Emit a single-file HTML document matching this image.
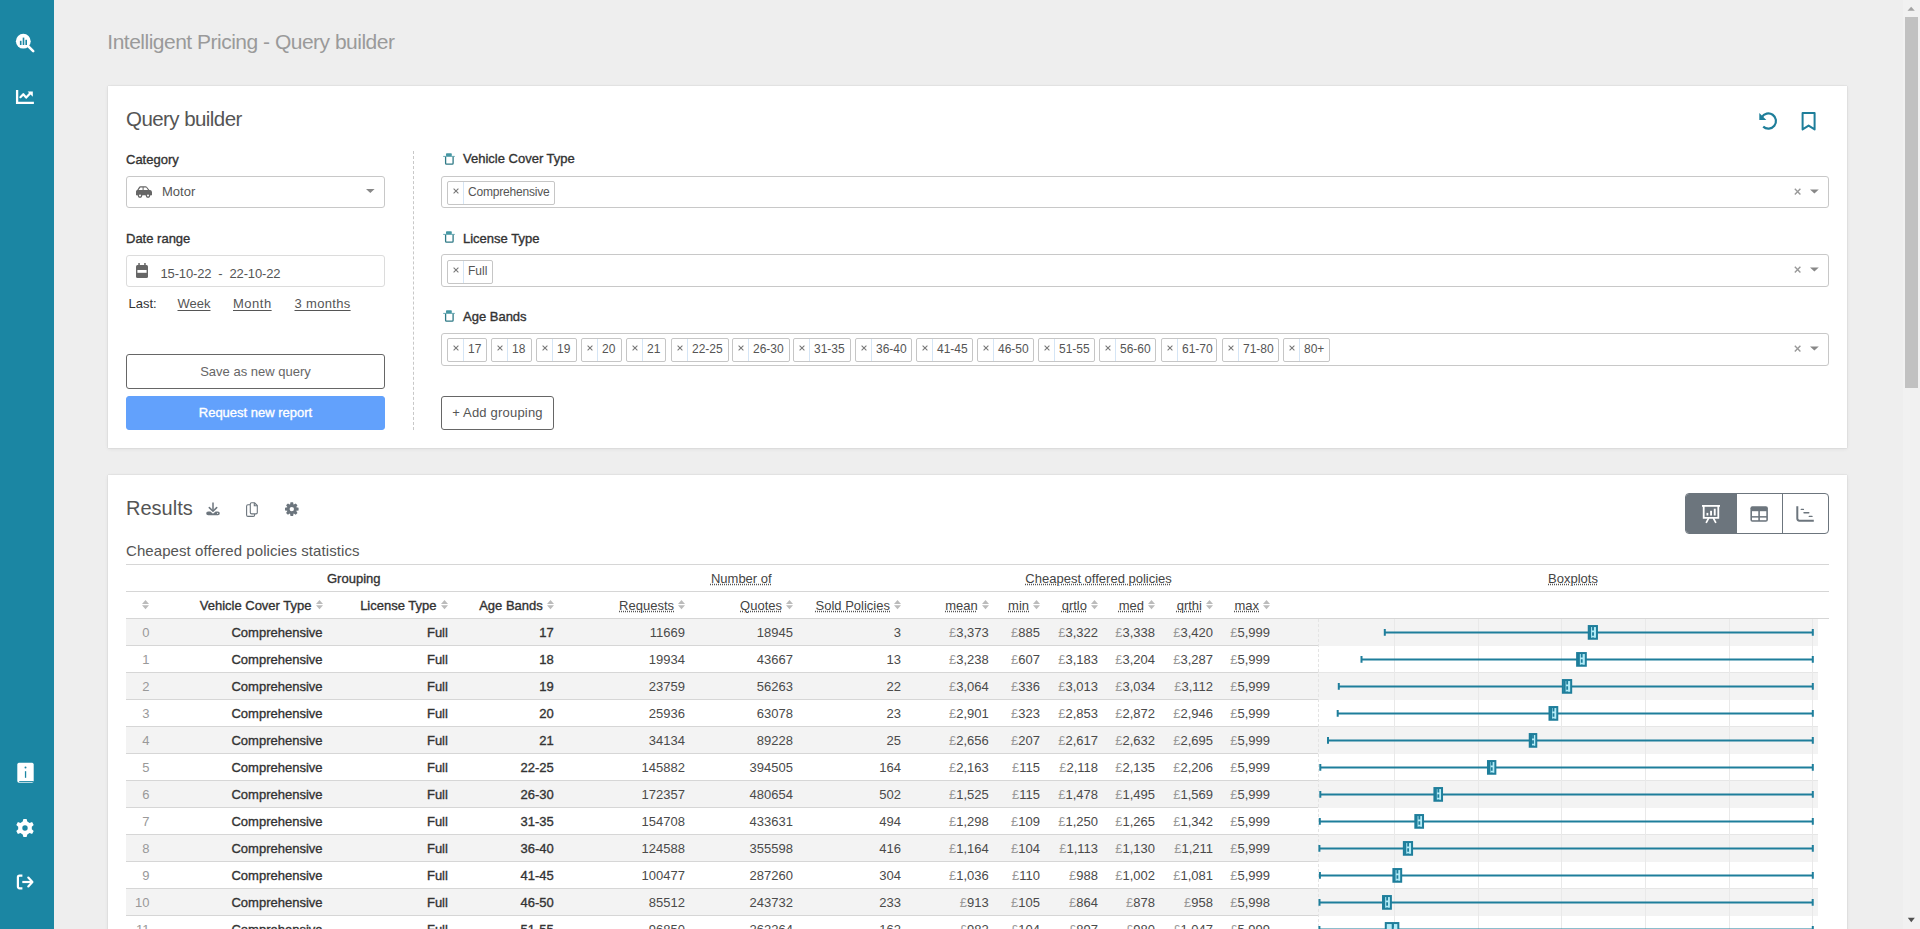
<!DOCTYPE html><html><head><meta charset="utf-8"><title>Intelligent Pricing - Query builder</title><style>
*{box-sizing:border-box;margin:0;padding:0}
html,body{width:1920px;height:929px;overflow:hidden;background:#eeeeee;font-family:"Liberation Sans",sans-serif;color:#333}
#side{position:absolute;left:0;top:0;width:54px;height:929px;background:#1b86a3}
#sb{position:absolute;left:1903px;top:0;width:17px;height:929px;background:#f1f1f1}
#thumb{position:absolute;left:1905px;top:17px;width:13px;height:371px;background:#c1c1c1}
.card{position:absolute;left:108px;width:1739px;background:#fff;box-shadow:0 0 1px rgba(0,0,0,.2),0 1px 4px rgba(0,0,0,.07)}
.t{position:absolute;white-space:nowrap;line-height:1}
.r{text-align:right}
.c{text-align:center}
.lbl{font-size:13px;color:#333;-webkit-text-stroke:0.35px #333}
.box{position:absolute;border:1px solid #c8c8c8;border-radius:3px;background:#fff}
.tag{position:absolute;height:24px;border:1px solid #c6c6c6;border-radius:2px;background:#fff}
.tag i{position:absolute;left:15px;top:0;width:1px;height:22px;background:#d5e5f5}
.tag svg{position:absolute;left:5px;top:5.6px}
.tag b{position:absolute;top:4px;font-weight:normal;font-size:12px;line-height:12px;color:#555;white-space:nowrap}
.btn{position:absolute;border:1px solid #666;border-radius:3px;background:#fff}
.dot{text-decoration:underline dotted #555;text-underline-offset:1px}
.hd{font-size:13px;color:#444}
.hb{font-size:13px;color:#333;-webkit-text-stroke:0.35px #333}
.cell{font-size:13px;color:#4a4a4a}
.gb{font-size:13px;color:#333;-webkit-text-stroke:0.35px #333}
.cp{letter-spacing:0px}
.pd{color:#999}
svg{position:absolute;overflow:visible}
</style></head><body>
<div id="side">
<svg style="left:0;top:0" width="54" height="929" viewBox="0 0 54 929"><circle cx="23.3" cy="41.2" r="7.4" fill="#fff"/><path d="M28.4 46.3 L33.2 51.1" stroke="#fff" stroke-width="2.6" stroke-linecap="round"/><rect x="19.9" y="40.8" width="1.6" height="4.2" fill="#1b86a3"/><rect x="22.7" y="37.6" width="1.6" height="7.4" fill="#1b86a3"/><rect x="25.4" y="39.8" width="1.6" height="5.2" fill="#1b86a3"/><path d="M17.1 90 V102.8 H33.9" stroke="#fff" stroke-width="2.3" fill="none"/><path d="M20.4 97.2 L23.3 94.2 L26.2 97.6 L30.5 93" stroke="#fff" stroke-width="2.2" fill="none" stroke-linejoin="round" stroke-linecap="round"/><path d="M27.6 91.6 H32.8 V96.8 Z" fill="#fff"/><rect x="17.3" y="762.8" width="16.4" height="20" rx="1.8" fill="#fff"/><rect x="19.2" y="781.1" width="14.5" height="1" fill="#1b86a3"/><circle cx="25.5" cy="767.4" r="1" fill="#1b86a3"/><rect x="24.9" y="771.2" width="1.3" height="6.6" fill="#1b86a3"/><g transform="translate(25,828)"><path fill="#fff" fill-rule="evenodd" d="M-1.6 -9 H1.6 L2.3 -6.4 L4.6 -5.1 L7.1 -5.9 L8.7 -3.1 L6.8 -1.3 V1.3 L8.7 3.1 L7.1 5.9 L4.6 5.1 L2.3 6.4 L1.6 9 H-1.6 L-2.3 6.4 L-4.6 5.1 L-7.1 5.9 L-8.7 3.1 L-6.8 1.3 V-1.3 L-8.7 -3.1 L-7.1 -5.9 L-4.6 -5.1 L-2.3 -6.4 Z M0 -2.7 A2.7 2.7 0 1 0 0 2.7 A2.7 2.7 0 1 0 0 -2.7 Z"/></g><path d="M22.4 875.6 H19.6 Q17.9 875.6 17.9 877.3 V886.6 Q17.9 888.3 19.6 888.3 H22.4" stroke="#fff" stroke-width="2.2" fill="none"/><path d="M22.3 882 H32" stroke="#fff" stroke-width="2.2"/><path d="M28.3 877.6 L32.4 882 L28.3 886.4" stroke="#fff" stroke-width="2.2" fill="none" stroke-linecap="round" stroke-linejoin="round"/></svg>
</div>
<div id="sb"></div><div id="thumb"></div>
<svg style="left:1903px;top:0" width="17" height="929"><path d="M4.5 10.8 H11.8 L8.15 6.8 Z" fill="#a3a3a3"/><path d="M4.8 917.7 H11.8 L8.3 922.2 Z" fill="#505050"/></svg>
<div class="t" style="left:107.3px;top:31px;font-size:21px;color:#9a9a9a;letter-spacing:-0.5px">Intelligent Pricing - Query builder</div>
<div class="card" style="top:86px;height:362px"></div>
<div class="t" style="left:126px;top:108.6px;font-size:20.5px;color:#555;letter-spacing:-0.56px">Query builder</div>
<div class="t lbl" style="left:126px;top:152.7px">Category</div>
<div class="box" style="left:126px;top:176px;width:259px;height:32px"></div>
<svg style="left:136px;top:186px" width="17" height="13" viewBox="0 0 17 13"><path fill="#666" d="M3.2 0.8 Q3.6 0.2 4.4 0.2 H9.6 Q10.3 0.2 10.8 0.8 L13.4 4 H14.2 Q16 4.3 16 6.2 V9.2 H0 V5.6 Q0 4.1 1.2 4 Z M2.6 4 H6.6 V1.5 H4.4 Z M7.6 4 H12 L10.2 1.5 H7.6 Z"/><circle cx="4" cy="9.6" r="2.3" fill="#666"/><circle cx="12" cy="9.6" r="2.3" fill="#666"/><circle cx="4" cy="9.6" r="1" fill="#fff"/><circle cx="12" cy="9.6" r="1" fill="#fff"/></svg>
<div class="t" style="left:162px;top:184.9px;font-size:13px;color:#555">Motor</div>
<svg style="left:0;top:0" width="1" height="1"><path d="M366 189 H374.6 L370.3 193 Z" fill="#888"/></svg>
<div class="t lbl" style="left:126px;top:231.8px">Date range</div>
<div class="box" style="left:126px;top:255px;width:259px;height:32px;border-color:#dcdcdc"></div>
<svg style="left:136px;top:263px" width="12" height="15" viewBox="0 0 12 15"><rect x="0" y="2" width="12" height="13" rx="1.5" fill="#666"/><rect x="2.3" y="0" width="1.5" height="3" fill="#666"/><rect x="8.2" y="0" width="1.5" height="3" fill="#666"/><rect x="1.4" y="7" width="9.2" height="2.8" fill="#fff"/></svg>
<div class="t" style="left:160.5px;top:267px;font-size:13px;color:#555;letter-spacing:-0.14px">15-10-22&nbsp; - &nbsp;22-10-22</div>
<div class="t" style="left:128.5px;top:297px;font-size:13px;color:#333">Last:</div>
<div class="t" style="left:177.5px;top:297px;font-size:13px;color:#555;text-decoration:underline;text-underline-offset:2px">Week</div>
<div class="t" style="left:233px;top:297px;font-size:13px;color:#555;text-decoration:underline;text-underline-offset:2px;letter-spacing:0.5px">Month</div>
<div class="t" style="left:294.5px;top:297px;font-size:13px;color:#555;text-decoration:underline;text-underline-offset:2px;letter-spacing:0.33px">3 months</div>
<div class="btn" style="left:126px;top:354px;width:259px;height:35px"></div>
<div class="t c" style="left:126px;width:259px;top:365px;font-size:13px;color:#666">Save as new query</div>
<div class="btn" style="left:126px;top:396px;width:259px;height:34px;background:#62a1fc;border-color:#62a1fc"></div>
<div class="t c" style="left:126px;width:259px;top:405.7px;font-size:13px;color:#fff;-webkit-text-stroke:0.35px #fff">Request new report</div>
<div style="position:absolute;left:413px;top:151px;width:0;height:279px;border-left:1px dashed #c8c8c8"></div>
<svg style="left:1755px;top:108px" width="80" height="30" viewBox="1755 108 80 30"><path d="M1761.8 117.2 A7.6 7.6 0 1 1 1763.2 126.6" stroke="#1e7e9a" stroke-width="2.2" fill="none"/><path d="M1759.3 113 V120 H1766.3 Z" fill="#1e7e9a"/><path d="M1802.6 113.1 H1814.6 V129.4 L1808.6 125.6 L1802.6 129.4 Z" stroke="#1e7e9a" stroke-width="2" fill="none" stroke-linejoin="round"/></svg>
<svg style="left:443px;top:153px" width="13" height="13" viewBox="0 0 13 13"><rect x="3" y="0.2" width="5.8" height="3.2" rx="0.8" fill="#4596a3"/><path d="M0.2 3.4 H11.8" stroke="#6aaab5" stroke-width="1"/><path d="M2.6 3.8 V10.3 Q2.6 11.2 3.5 11.2 H9.2 Q10.1 11.2 10.1 10.3 V3.8" stroke="#2f7a86" stroke-width="1.3" fill="none"/></svg>
<div class="t lbl" style="left:463px;top:152.0px;letter-spacing:0.00px">Vehicle Cover Type</div>
<div class="box" style="left:441px;top:176px;width:1388px;height:32px"></div>
<div class="tag" style="left:447px;top:181px;width:108px"><svg width="6" height="6" viewBox="0 0 6 6"><path d="M0.6 0.6 L5.4 5.4 M5.4 0.6 L0.6 5.4" stroke="#777" stroke-width="1.05"/></svg><i></i><b style="left:20px"><span style="letter-spacing:-0.2px">Comprehensive</span></b></div>
<svg style="left:1794px;top:188px" width="26" height="8" viewBox="0 0 26 8"><path d="M0.8 0.8 L6.4 6.4 M6.4 0.8 L0.8 6.4" stroke="#999" stroke-width="1.4"/><path d="M16 1.4 H24.8 L20.4 5.4 Z" fill="#888"/></svg>
<svg style="left:443px;top:231px" width="13" height="13" viewBox="0 0 13 13"><rect x="3" y="0.2" width="5.8" height="3.2" rx="0.8" fill="#4596a3"/><path d="M0.2 3.4 H11.8" stroke="#6aaab5" stroke-width="1"/><path d="M2.6 3.8 V10.3 Q2.6 11.2 3.5 11.2 H9.2 Q10.1 11.2 10.1 10.3 V3.8" stroke="#2f7a86" stroke-width="1.3" fill="none"/></svg>
<div class="t lbl" style="left:463px;top:231.5px;letter-spacing:0.00px">License Type</div>
<div class="box" style="left:441px;top:254px;width:1388px;height:33px"></div>
<div class="tag" style="left:447px;top:260px;width:46px"><svg width="6" height="6" viewBox="0 0 6 6"><path d="M0.6 0.6 L5.4 5.4 M5.4 0.6 L0.6 5.4" stroke="#777" stroke-width="1.05"/></svg><i></i><b style="left:20px">Full</b></div>
<svg style="left:1794px;top:266px" width="26" height="8" viewBox="0 0 26 8"><path d="M0.8 0.8 L6.4 6.4 M6.4 0.8 L0.8 6.4" stroke="#999" stroke-width="1.4"/><path d="M16 1.4 H24.8 L20.4 5.4 Z" fill="#888"/></svg>
<svg style="left:443px;top:310px" width="13" height="13" viewBox="0 0 13 13"><rect x="3" y="0.2" width="5.8" height="3.2" rx="0.8" fill="#4596a3"/><path d="M0.2 3.4 H11.8" stroke="#6aaab5" stroke-width="1"/><path d="M2.6 3.8 V10.3 Q2.6 11.2 3.5 11.2 H9.2 Q10.1 11.2 10.1 10.3 V3.8" stroke="#2f7a86" stroke-width="1.3" fill="none"/></svg>
<div class="t lbl" style="left:463px;top:310.0px;letter-spacing:0.00px">Age Bands</div>
<div class="box" style="left:441px;top:333px;width:1388px;height:33px"></div>
<div class="tag" style="left:447px;top:338px;width:40px"><svg width="6" height="6" viewBox="0 0 6 6"><path d="M0.6 0.6 L5.4 5.4 M5.4 0.6 L0.6 5.4" stroke="#777" stroke-width="1.05"/></svg><i></i><b style="left:20px">17</b></div>
<div class="tag" style="left:491px;top:338px;width:41px"><svg width="6" height="6" viewBox="0 0 6 6"><path d="M0.6 0.6 L5.4 5.4 M5.4 0.6 L0.6 5.4" stroke="#777" stroke-width="1.05"/></svg><i></i><b style="left:20px">18</b></div>
<div class="tag" style="left:536px;top:338px;width:41px"><svg width="6" height="6" viewBox="0 0 6 6"><path d="M0.6 0.6 L5.4 5.4 M5.4 0.6 L0.6 5.4" stroke="#777" stroke-width="1.05"/></svg><i></i><b style="left:20px">19</b></div>
<div class="tag" style="left:581px;top:338px;width:41px"><svg width="6" height="6" viewBox="0 0 6 6"><path d="M0.6 0.6 L5.4 5.4 M5.4 0.6 L0.6 5.4" stroke="#777" stroke-width="1.05"/></svg><i></i><b style="left:20px">20</b></div>
<div class="tag" style="left:626px;top:338px;width:40px"><svg width="6" height="6" viewBox="0 0 6 6"><path d="M0.6 0.6 L5.4 5.4 M5.4 0.6 L0.6 5.4" stroke="#777" stroke-width="1.05"/></svg><i></i><b style="left:20px">21</b></div>
<div class="tag" style="left:671px;top:338px;width:58px"><svg width="6" height="6" viewBox="0 0 6 6"><path d="M0.6 0.6 L5.4 5.4 M5.4 0.6 L0.6 5.4" stroke="#777" stroke-width="1.05"/></svg><i></i><b style="left:20px">22-25</b></div>
<div class="tag" style="left:732px;top:338px;width:58px"><svg width="6" height="6" viewBox="0 0 6 6"><path d="M0.6 0.6 L5.4 5.4 M5.4 0.6 L0.6 5.4" stroke="#777" stroke-width="1.05"/></svg><i></i><b style="left:20px">26-30</b></div>
<div class="tag" style="left:793px;top:338px;width:58px"><svg width="6" height="6" viewBox="0 0 6 6"><path d="M0.6 0.6 L5.4 5.4 M5.4 0.6 L0.6 5.4" stroke="#777" stroke-width="1.05"/></svg><i></i><b style="left:20px">31-35</b></div>
<div class="tag" style="left:855px;top:338px;width:57px"><svg width="6" height="6" viewBox="0 0 6 6"><path d="M0.6 0.6 L5.4 5.4 M5.4 0.6 L0.6 5.4" stroke="#777" stroke-width="1.05"/></svg><i></i><b style="left:20px">36-40</b></div>
<div class="tag" style="left:916px;top:338px;width:57px"><svg width="6" height="6" viewBox="0 0 6 6"><path d="M0.6 0.6 L5.4 5.4 M5.4 0.6 L0.6 5.4" stroke="#777" stroke-width="1.05"/></svg><i></i><b style="left:20px">41-45</b></div>
<div class="tag" style="left:977px;top:338px;width:57px"><svg width="6" height="6" viewBox="0 0 6 6"><path d="M0.6 0.6 L5.4 5.4 M5.4 0.6 L0.6 5.4" stroke="#777" stroke-width="1.05"/></svg><i></i><b style="left:20px">46-50</b></div>
<div class="tag" style="left:1038px;top:338px;width:57px"><svg width="6" height="6" viewBox="0 0 6 6"><path d="M0.6 0.6 L5.4 5.4 M5.4 0.6 L0.6 5.4" stroke="#777" stroke-width="1.05"/></svg><i></i><b style="left:20px">51-55</b></div>
<div class="tag" style="left:1099px;top:338px;width:57px"><svg width="6" height="6" viewBox="0 0 6 6"><path d="M0.6 0.6 L5.4 5.4 M5.4 0.6 L0.6 5.4" stroke="#777" stroke-width="1.05"/></svg><i></i><b style="left:20px">56-60</b></div>
<div class="tag" style="left:1161px;top:338px;width:56px"><svg width="6" height="6" viewBox="0 0 6 6"><path d="M0.6 0.6 L5.4 5.4 M5.4 0.6 L0.6 5.4" stroke="#777" stroke-width="1.05"/></svg><i></i><b style="left:20px">61-70</b></div>
<div class="tag" style="left:1222px;top:338px;width:57px"><svg width="6" height="6" viewBox="0 0 6 6"><path d="M0.6 0.6 L5.4 5.4 M5.4 0.6 L0.6 5.4" stroke="#777" stroke-width="1.05"/></svg><i></i><b style="left:20px">71-80</b></div>
<div class="tag" style="left:1283px;top:338px;width:47px"><svg width="6" height="6" viewBox="0 0 6 6"><path d="M0.6 0.6 L5.4 5.4 M5.4 0.6 L0.6 5.4" stroke="#777" stroke-width="1.05"/></svg><i></i><b style="left:20px">80+</b></div>
<svg style="left:1794px;top:345px" width="26" height="8" viewBox="0 0 26 8"><path d="M0.8 0.8 L6.4 6.4 M6.4 0.8 L0.8 6.4" stroke="#999" stroke-width="1.4"/><path d="M16 1.4 H24.8 L20.4 5.4 Z" fill="#888"/></svg>
<div class="btn" style="left:441px;top:396px;width:113px;height:34px"></div>
<div class="t c" style="left:441px;width:113px;top:405.7px;font-size:13px;color:#555;letter-spacing:0.2px">+ Add grouping</div>
<div class="card" style="top:475px;height:600px"></div>
<div class="t" style="left:126px;top:497.7px;font-size:20px;color:#555">Results</div>
<svg style="left:200px;top:495px" width="110" height="30" viewBox="200 495 110 30"><path d="M213 502.5 V511" stroke="#6c757d" stroke-width="1.5"/><path d="M209.3 507.6 L213 511.2 L216.7 507.6" stroke="#6c757d" stroke-width="1.5" fill="none" stroke-linecap="round" stroke-linejoin="round"/><path d="M208.2 511.4 H210.4 L213 513.8 L215.6 511.4 H217.8 Q219.8 511.4 219.8 513.35 Q219.8 515.3 217.8 515.3 H208.2 Q206.2 515.3 206.2 513.35 Q206.2 511.4 208.2 511.4 Z" fill="#6c757d"/><circle cx="217.6" cy="513.3" r="0.6" fill="#fff"/><path d="M250.2 504.8 H248 Q246.6 504.8 246.6 506.2 V515 Q246.6 516.4 248 516.4 H253.2 Q254.6 516.4 254.6 515 V514" stroke="#6c757d" stroke-width="1.1" fill="none"/><path d="M251.6 502.8 H254.6 L257.3 505.5 V512.6 Q257.3 513.9 256 513.9 H251.6 Q250.3 513.9 250.3 512.6 V504.1 Q250.3 502.8 251.6 502.8 Z" stroke="#6c757d" stroke-width="1.1" fill="#fff"/><path d="M254.3 503 V505.8 H257.1" stroke="#6c757d" stroke-width="1.1" fill="none"/></svg>
<svg style="left:0;top:0" width="400" height="600"><path fill="#6c757d" fill-rule="evenodd" d="M290.04 504.53 L290.51 502.32 L293.09 502.32 L293.56 504.53 L293.79 504.62 L295.68 503.39 L297.51 505.22 L296.28 507.11 L296.37 507.34 L298.58 507.81 L298.58 510.39 L296.37 510.86 L296.28 511.09 L297.51 512.98 L295.68 514.81 L293.79 513.58 L293.56 513.67 L293.09 515.88 L290.51 515.88 L290.04 513.67 L289.81 513.58 L287.92 514.81 L286.09 512.98 L287.32 511.09 L287.23 510.86 L285.02 510.39 L285.02 507.81 L287.23 507.34 L287.32 507.11 L286.09 505.22 L287.92 503.39 L289.81 504.62 Z M291.80 506.90 A2.20 2.20 0 1 0 291.80 511.30 A2.20 2.20 0 1 0 291.80 506.90 Z"/></svg>
<div style="position:absolute;left:1685px;top:493px;width:144px;height:41px;border:1px solid #6c757d;border-radius:4px;overflow:hidden;background:#fff"><div style="position:absolute;left:0;top:0;width:51px;height:39px;background:#6c757d"></div><div style="position:absolute;left:96px;top:0;width:1px;height:39px;background:#6c757d"></div></div>
<svg style="left:1685px;top:493px" width="144" height="41" viewBox="1685 493 144 41"><path d="M1702 505.9 H1720" stroke="#fff" stroke-width="1.8"/><path d="M1703.7 505.9 V517.8 H1718.3 V505.9" stroke="#fff" stroke-width="1.8" fill="none"/><rect x="1706.5" y="512.9" width="1.8" height="2.6" fill="#fff"/><rect x="1710.1" y="510.8" width="1.9" height="4.7" fill="#fff"/><rect x="1713.8" y="508.7" width="1.9" height="6.8" fill="#fff"/><path d="M1708.4 518.6 L1706.4 522.3 M1713.6 518.6 L1715.6 522.3" stroke="#fff" stroke-width="1.7" stroke-linecap="round"/><rect x="1750.4" y="506.3" width="17.5" height="15.4" rx="2" fill="#6c757d"/><rect x="1752" y="511.2" width="6.3" height="4.9" fill="#fff"/><rect x="1759.9" y="511.2" width="6.4" height="4.9" fill="#fff"/><rect x="1752" y="517.6" width="6.3" height="2.6" fill="#fff"/><rect x="1759.9" y="517.6" width="6.4" height="2.6" fill="#fff"/><path d="M1797.3 506.3 V518.6 Q1797.3 520.7 1799.4 520.7 H1813.8" stroke="#6c757d" stroke-width="2" fill="none"/><path d="M1801.3 509.4 H1803.4 M1804 512.7 H1808.8 M1809.3 516.4 H1812" stroke="#6c757d" stroke-width="1.4" stroke-linecap="round"/></svg>
<div class="t" style="left:126px;top:542.9px;font-size:15px;color:#555;letter-spacing:0.08px">Cheapest offered policies statistics</div>
<div style="position:absolute;left:126px;top:619px;width:1192px;height:26px;background:#f3f3f3"></div>
<div style="position:absolute;left:126px;top:673px;width:1192px;height:26px;background:#f3f3f3"></div>
<div style="position:absolute;left:126px;top:727px;width:1192px;height:26px;background:#f3f3f3"></div>
<div style="position:absolute;left:126px;top:781px;width:1192px;height:26px;background:#f3f3f3"></div>
<div style="position:absolute;left:126px;top:835px;width:1192px;height:26px;background:#f3f3f3"></div>
<div style="position:absolute;left:126px;top:889px;width:1192px;height:26px;background:#f3f3f3"></div>
<div style="position:absolute;left:1318px;top:619px;width:500px;height:27px;background:#f3f3f3"></div>
<div style="position:absolute;left:1318px;top:673px;width:500px;height:27px;background:#f3f3f3"></div>
<div style="position:absolute;left:1318px;top:727px;width:500px;height:27px;background:#f3f3f3"></div>
<div style="position:absolute;left:1318px;top:781px;width:500px;height:27px;background:#f3f3f3"></div>
<div style="position:absolute;left:1318px;top:835px;width:500px;height:27px;background:#f3f3f3"></div>
<div style="position:absolute;left:1318px;top:889px;width:500px;height:27px;background:#f3f3f3"></div>
<div style="position:absolute;left:126px;top:564px;width:1703px;height:1px;background:#d6d6d6"></div>
<div style="position:absolute;left:126px;top:591px;width:1703px;height:1px;background:#d6d6d6"></div>
<div style="position:absolute;left:126px;top:618px;width:1703px;height:1px;background:#d6d6d6"></div>
<div style="position:absolute;left:126px;top:645px;width:1192px;height:1px;background:#d6d6d6"></div>
<div style="position:absolute;left:126px;top:672px;width:1192px;height:1px;background:#d6d6d6"></div>
<div style="position:absolute;left:1318px;top:672px;width:500px;height:1px;background:#e6e6e6"></div>
<div style="position:absolute;left:126px;top:699px;width:1192px;height:1px;background:#d6d6d6"></div>
<div style="position:absolute;left:126px;top:726px;width:1192px;height:1px;background:#d6d6d6"></div>
<div style="position:absolute;left:1318px;top:726px;width:500px;height:1px;background:#e6e6e6"></div>
<div style="position:absolute;left:126px;top:753px;width:1192px;height:1px;background:#d6d6d6"></div>
<div style="position:absolute;left:126px;top:780px;width:1192px;height:1px;background:#d6d6d6"></div>
<div style="position:absolute;left:1318px;top:780px;width:500px;height:1px;background:#e6e6e6"></div>
<div style="position:absolute;left:126px;top:807px;width:1192px;height:1px;background:#d6d6d6"></div>
<div style="position:absolute;left:126px;top:834px;width:1192px;height:1px;background:#d6d6d6"></div>
<div style="position:absolute;left:1318px;top:834px;width:500px;height:1px;background:#e6e6e6"></div>
<div style="position:absolute;left:126px;top:861px;width:1192px;height:1px;background:#d6d6d6"></div>
<div style="position:absolute;left:126px;top:888px;width:1192px;height:1px;background:#d6d6d6"></div>
<div style="position:absolute;left:1318px;top:888px;width:500px;height:1px;background:#e6e6e6"></div>
<div style="position:absolute;left:126px;top:915px;width:1192px;height:1px;background:#d6d6d6"></div>
<div style="position:absolute;left:126px;top:942px;width:1192px;height:1px;background:#d6d6d6"></div>
<div style="position:absolute;left:1318px;top:942px;width:500px;height:1px;background:#e6e6e6"></div>
<div class="t c hb" style="left:203.75px;width:300px;top:571.5px">Grouping</div>
<div class="t c hd" style="left:591.30px;width:300px;top:571.5px"><span class="dot">Number of</span></div>
<div class="t c hd" style="left:948.60px;width:300px;top:571.5px"><span class="dot">Cheapest offered policies</span></div>
<div class="t c hd" style="left:1423.00px;width:300px;top:571.5px"><span class="dot">Boxplots</span></div>
<svg style="left:142.00px;top:600px" width="7" height="10" viewBox="0 0 7 10"><path d="M0 4 H7 L3.5 0 Z M0 5.2 H7 L3.5 9.2 Z" fill="#bbb"/></svg>
<svg style="left:315.50px;top:600px" width="7" height="10" viewBox="0 0 7 10"><path d="M0 4 H7 L3.5 0 Z M0 5.2 H7 L3.5 9.2 Z" fill="#bbb"/></svg>
<div class="t r hb" style="left:11.50px;width:300px;top:598.5px"><span style="letter-spacing:0.00px">Vehicle Cover Type</span></div>
<svg style="left:440.50px;top:600px" width="7" height="10" viewBox="0 0 7 10"><path d="M0 4 H7 L3.5 0 Z M0 5.2 H7 L3.5 9.2 Z" fill="#bbb"/></svg>
<div class="t r hb" style="left:136.50px;width:300px;top:598.5px"><span style="letter-spacing:0.00px">License Type</span></div>
<svg style="left:546.75px;top:600px" width="7" height="10" viewBox="0 0 7 10"><path d="M0 4 H7 L3.5 0 Z M0 5.2 H7 L3.5 9.2 Z" fill="#bbb"/></svg>
<div class="t r hb" style="left:242.75px;width:300px;top:598.5px"><span style="letter-spacing:0.00px">Age Bands</span></div>
<svg style="left:678.00px;top:600px" width="7" height="10" viewBox="0 0 7 10"><path d="M0 4 H7 L3.5 0 Z M0 5.2 H7 L3.5 9.2 Z" fill="#bbb"/></svg>
<div class="t r hd" style="left:374.00px;width:300px;top:598.5px"><span class="dot">Requests</span></div>
<svg style="left:786.00px;top:600px" width="7" height="10" viewBox="0 0 7 10"><path d="M0 4 H7 L3.5 0 Z M0 5.2 H7 L3.5 9.2 Z" fill="#bbb"/></svg>
<div class="t r hd" style="left:482.00px;width:300px;top:598.5px"><span class="dot">Quotes</span></div>
<svg style="left:894.00px;top:600px" width="7" height="10" viewBox="0 0 7 10"><path d="M0 4 H7 L3.5 0 Z M0 5.2 H7 L3.5 9.2 Z" fill="#bbb"/></svg>
<div class="t r hd" style="left:590.00px;width:300px;top:598.5px"><span class="dot">Sold Policies</span></div>
<svg style="left:981.75px;top:600px" width="7" height="10" viewBox="0 0 7 10"><path d="M0 4 H7 L3.5 0 Z M0 5.2 H7 L3.5 9.2 Z" fill="#bbb"/></svg>
<div class="t r hd" style="left:677.75px;width:300px;top:598.5px"><span class="dot">mean</span></div>
<svg style="left:1033.00px;top:600px" width="7" height="10" viewBox="0 0 7 10"><path d="M0 4 H7 L3.5 0 Z M0 5.2 H7 L3.5 9.2 Z" fill="#bbb"/></svg>
<div class="t r hd" style="left:729.00px;width:300px;top:598.5px"><span class="dot">min</span></div>
<svg style="left:1091.00px;top:600px" width="7" height="10" viewBox="0 0 7 10"><path d="M0 4 H7 L3.5 0 Z M0 5.2 H7 L3.5 9.2 Z" fill="#bbb"/></svg>
<div class="t r hd" style="left:787.00px;width:300px;top:598.5px"><span class="dot">qrtlo</span></div>
<svg style="left:1148.00px;top:600px" width="7" height="10" viewBox="0 0 7 10"><path d="M0 4 H7 L3.5 0 Z M0 5.2 H7 L3.5 9.2 Z" fill="#bbb"/></svg>
<div class="t r hd" style="left:844.00px;width:300px;top:598.5px"><span class="dot">med</span></div>
<svg style="left:1206.00px;top:600px" width="7" height="10" viewBox="0 0 7 10"><path d="M0 4 H7 L3.5 0 Z M0 5.2 H7 L3.5 9.2 Z" fill="#bbb"/></svg>
<div class="t r hd" style="left:902.00px;width:300px;top:598.5px"><span class="dot">qrthi</span></div>
<svg style="left:1263.00px;top:600px" width="7" height="10" viewBox="0 0 7 10"><path d="M0 4 H7 L3.5 0 Z M0 5.2 H7 L3.5 9.2 Z" fill="#bbb"/></svg>
<div class="t r hd" style="left:959.00px;width:300px;top:598.5px"><span class="dot">max</span></div>
<div class="t r cell" style="left:109.5px;width:40px;top:626px;color:#999">0</div>
<div class="t r gb" style="left:22.50px;width:300px;top:626px"><span class="cp">Comprehensive</span></div>
<div class="t r gb" style="left:147.90px;width:300px;top:626px">Full</div>
<div class="t r gb" style="left:253.75px;width:300px;top:626px">17</div>
<div class="t r cell" style="left:385.00px;width:300px;top:626px">11669</div>
<div class="t r cell" style="left:493.00px;width:300px;top:626px">18945</div>
<div class="t r cell" style="left:601.00px;width:300px;top:626px">3</div>
<div class="t r cell" style="left:688.75px;width:300px;top:626px"><span class="pd">&pound;</span>3,373</div>
<div class="t r cell" style="left:740.00px;width:300px;top:626px"><span class="pd">&pound;</span>885</div>
<div class="t r cell" style="left:798.00px;width:300px;top:626px"><span class="pd">&pound;</span>3,322</div>
<div class="t r cell" style="left:855.00px;width:300px;top:626px"><span class="pd">&pound;</span>3,338</div>
<div class="t r cell" style="left:913.00px;width:300px;top:626px"><span class="pd">&pound;</span>3,420</div>
<div class="t r cell" style="left:970.00px;width:300px;top:626px"><span class="pd">&pound;</span>5,999</div>
<div class="t r cell" style="left:109.5px;width:40px;top:653px;color:#999">1</div>
<div class="t r gb" style="left:22.50px;width:300px;top:653px"><span class="cp">Comprehensive</span></div>
<div class="t r gb" style="left:147.90px;width:300px;top:653px">Full</div>
<div class="t r gb" style="left:253.75px;width:300px;top:653px">18</div>
<div class="t r cell" style="left:385.00px;width:300px;top:653px">19934</div>
<div class="t r cell" style="left:493.00px;width:300px;top:653px">43667</div>
<div class="t r cell" style="left:601.00px;width:300px;top:653px">13</div>
<div class="t r cell" style="left:688.75px;width:300px;top:653px"><span class="pd">&pound;</span>3,238</div>
<div class="t r cell" style="left:740.00px;width:300px;top:653px"><span class="pd">&pound;</span>607</div>
<div class="t r cell" style="left:798.00px;width:300px;top:653px"><span class="pd">&pound;</span>3,183</div>
<div class="t r cell" style="left:855.00px;width:300px;top:653px"><span class="pd">&pound;</span>3,204</div>
<div class="t r cell" style="left:913.00px;width:300px;top:653px"><span class="pd">&pound;</span>3,287</div>
<div class="t r cell" style="left:970.00px;width:300px;top:653px"><span class="pd">&pound;</span>5,999</div>
<div class="t r cell" style="left:109.5px;width:40px;top:680px;color:#999">2</div>
<div class="t r gb" style="left:22.50px;width:300px;top:680px"><span class="cp">Comprehensive</span></div>
<div class="t r gb" style="left:147.90px;width:300px;top:680px">Full</div>
<div class="t r gb" style="left:253.75px;width:300px;top:680px">19</div>
<div class="t r cell" style="left:385.00px;width:300px;top:680px">23759</div>
<div class="t r cell" style="left:493.00px;width:300px;top:680px">56263</div>
<div class="t r cell" style="left:601.00px;width:300px;top:680px">22</div>
<div class="t r cell" style="left:688.75px;width:300px;top:680px"><span class="pd">&pound;</span>3,064</div>
<div class="t r cell" style="left:740.00px;width:300px;top:680px"><span class="pd">&pound;</span>336</div>
<div class="t r cell" style="left:798.00px;width:300px;top:680px"><span class="pd">&pound;</span>3,013</div>
<div class="t r cell" style="left:855.00px;width:300px;top:680px"><span class="pd">&pound;</span>3,034</div>
<div class="t r cell" style="left:913.00px;width:300px;top:680px"><span class="pd">&pound;</span>3,112</div>
<div class="t r cell" style="left:970.00px;width:300px;top:680px"><span class="pd">&pound;</span>5,999</div>
<div class="t r cell" style="left:109.5px;width:40px;top:707px;color:#999">3</div>
<div class="t r gb" style="left:22.50px;width:300px;top:707px"><span class="cp">Comprehensive</span></div>
<div class="t r gb" style="left:147.90px;width:300px;top:707px">Full</div>
<div class="t r gb" style="left:253.75px;width:300px;top:707px">20</div>
<div class="t r cell" style="left:385.00px;width:300px;top:707px">25936</div>
<div class="t r cell" style="left:493.00px;width:300px;top:707px">63078</div>
<div class="t r cell" style="left:601.00px;width:300px;top:707px">23</div>
<div class="t r cell" style="left:688.75px;width:300px;top:707px"><span class="pd">&pound;</span>2,901</div>
<div class="t r cell" style="left:740.00px;width:300px;top:707px"><span class="pd">&pound;</span>323</div>
<div class="t r cell" style="left:798.00px;width:300px;top:707px"><span class="pd">&pound;</span>2,853</div>
<div class="t r cell" style="left:855.00px;width:300px;top:707px"><span class="pd">&pound;</span>2,872</div>
<div class="t r cell" style="left:913.00px;width:300px;top:707px"><span class="pd">&pound;</span>2,946</div>
<div class="t r cell" style="left:970.00px;width:300px;top:707px"><span class="pd">&pound;</span>5,999</div>
<div class="t r cell" style="left:109.5px;width:40px;top:734px;color:#999">4</div>
<div class="t r gb" style="left:22.50px;width:300px;top:734px"><span class="cp">Comprehensive</span></div>
<div class="t r gb" style="left:147.90px;width:300px;top:734px">Full</div>
<div class="t r gb" style="left:253.75px;width:300px;top:734px">21</div>
<div class="t r cell" style="left:385.00px;width:300px;top:734px">34134</div>
<div class="t r cell" style="left:493.00px;width:300px;top:734px">89228</div>
<div class="t r cell" style="left:601.00px;width:300px;top:734px">25</div>
<div class="t r cell" style="left:688.75px;width:300px;top:734px"><span class="pd">&pound;</span>2,656</div>
<div class="t r cell" style="left:740.00px;width:300px;top:734px"><span class="pd">&pound;</span>207</div>
<div class="t r cell" style="left:798.00px;width:300px;top:734px"><span class="pd">&pound;</span>2,617</div>
<div class="t r cell" style="left:855.00px;width:300px;top:734px"><span class="pd">&pound;</span>2,632</div>
<div class="t r cell" style="left:913.00px;width:300px;top:734px"><span class="pd">&pound;</span>2,695</div>
<div class="t r cell" style="left:970.00px;width:300px;top:734px"><span class="pd">&pound;</span>5,999</div>
<div class="t r cell" style="left:109.5px;width:40px;top:761px;color:#999">5</div>
<div class="t r gb" style="left:22.50px;width:300px;top:761px"><span class="cp">Comprehensive</span></div>
<div class="t r gb" style="left:147.90px;width:300px;top:761px">Full</div>
<div class="t r gb" style="left:253.75px;width:300px;top:761px">22-25</div>
<div class="t r cell" style="left:385.00px;width:300px;top:761px">145882</div>
<div class="t r cell" style="left:493.00px;width:300px;top:761px">394505</div>
<div class="t r cell" style="left:601.00px;width:300px;top:761px">164</div>
<div class="t r cell" style="left:688.75px;width:300px;top:761px"><span class="pd">&pound;</span>2,163</div>
<div class="t r cell" style="left:740.00px;width:300px;top:761px"><span class="pd">&pound;</span>115</div>
<div class="t r cell" style="left:798.00px;width:300px;top:761px"><span class="pd">&pound;</span>2,118</div>
<div class="t r cell" style="left:855.00px;width:300px;top:761px"><span class="pd">&pound;</span>2,135</div>
<div class="t r cell" style="left:913.00px;width:300px;top:761px"><span class="pd">&pound;</span>2,206</div>
<div class="t r cell" style="left:970.00px;width:300px;top:761px"><span class="pd">&pound;</span>5,999</div>
<div class="t r cell" style="left:109.5px;width:40px;top:788px;color:#999">6</div>
<div class="t r gb" style="left:22.50px;width:300px;top:788px"><span class="cp">Comprehensive</span></div>
<div class="t r gb" style="left:147.90px;width:300px;top:788px">Full</div>
<div class="t r gb" style="left:253.75px;width:300px;top:788px">26-30</div>
<div class="t r cell" style="left:385.00px;width:300px;top:788px">172357</div>
<div class="t r cell" style="left:493.00px;width:300px;top:788px">480654</div>
<div class="t r cell" style="left:601.00px;width:300px;top:788px">502</div>
<div class="t r cell" style="left:688.75px;width:300px;top:788px"><span class="pd">&pound;</span>1,525</div>
<div class="t r cell" style="left:740.00px;width:300px;top:788px"><span class="pd">&pound;</span>115</div>
<div class="t r cell" style="left:798.00px;width:300px;top:788px"><span class="pd">&pound;</span>1,478</div>
<div class="t r cell" style="left:855.00px;width:300px;top:788px"><span class="pd">&pound;</span>1,495</div>
<div class="t r cell" style="left:913.00px;width:300px;top:788px"><span class="pd">&pound;</span>1,569</div>
<div class="t r cell" style="left:970.00px;width:300px;top:788px"><span class="pd">&pound;</span>5,999</div>
<div class="t r cell" style="left:109.5px;width:40px;top:815px;color:#999">7</div>
<div class="t r gb" style="left:22.50px;width:300px;top:815px"><span class="cp">Comprehensive</span></div>
<div class="t r gb" style="left:147.90px;width:300px;top:815px">Full</div>
<div class="t r gb" style="left:253.75px;width:300px;top:815px">31-35</div>
<div class="t r cell" style="left:385.00px;width:300px;top:815px">154708</div>
<div class="t r cell" style="left:493.00px;width:300px;top:815px">433631</div>
<div class="t r cell" style="left:601.00px;width:300px;top:815px">494</div>
<div class="t r cell" style="left:688.75px;width:300px;top:815px"><span class="pd">&pound;</span>1,298</div>
<div class="t r cell" style="left:740.00px;width:300px;top:815px"><span class="pd">&pound;</span>109</div>
<div class="t r cell" style="left:798.00px;width:300px;top:815px"><span class="pd">&pound;</span>1,250</div>
<div class="t r cell" style="left:855.00px;width:300px;top:815px"><span class="pd">&pound;</span>1,265</div>
<div class="t r cell" style="left:913.00px;width:300px;top:815px"><span class="pd">&pound;</span>1,342</div>
<div class="t r cell" style="left:970.00px;width:300px;top:815px"><span class="pd">&pound;</span>5,999</div>
<div class="t r cell" style="left:109.5px;width:40px;top:842px;color:#999">8</div>
<div class="t r gb" style="left:22.50px;width:300px;top:842px"><span class="cp">Comprehensive</span></div>
<div class="t r gb" style="left:147.90px;width:300px;top:842px">Full</div>
<div class="t r gb" style="left:253.75px;width:300px;top:842px">36-40</div>
<div class="t r cell" style="left:385.00px;width:300px;top:842px">124588</div>
<div class="t r cell" style="left:493.00px;width:300px;top:842px">355598</div>
<div class="t r cell" style="left:601.00px;width:300px;top:842px">416</div>
<div class="t r cell" style="left:688.75px;width:300px;top:842px"><span class="pd">&pound;</span>1,164</div>
<div class="t r cell" style="left:740.00px;width:300px;top:842px"><span class="pd">&pound;</span>104</div>
<div class="t r cell" style="left:798.00px;width:300px;top:842px"><span class="pd">&pound;</span>1,113</div>
<div class="t r cell" style="left:855.00px;width:300px;top:842px"><span class="pd">&pound;</span>1,130</div>
<div class="t r cell" style="left:913.00px;width:300px;top:842px"><span class="pd">&pound;</span>1,211</div>
<div class="t r cell" style="left:970.00px;width:300px;top:842px"><span class="pd">&pound;</span>5,999</div>
<div class="t r cell" style="left:109.5px;width:40px;top:869px;color:#999">9</div>
<div class="t r gb" style="left:22.50px;width:300px;top:869px"><span class="cp">Comprehensive</span></div>
<div class="t r gb" style="left:147.90px;width:300px;top:869px">Full</div>
<div class="t r gb" style="left:253.75px;width:300px;top:869px">41-45</div>
<div class="t r cell" style="left:385.00px;width:300px;top:869px">100477</div>
<div class="t r cell" style="left:493.00px;width:300px;top:869px">287260</div>
<div class="t r cell" style="left:601.00px;width:300px;top:869px">304</div>
<div class="t r cell" style="left:688.75px;width:300px;top:869px"><span class="pd">&pound;</span>1,036</div>
<div class="t r cell" style="left:740.00px;width:300px;top:869px"><span class="pd">&pound;</span>110</div>
<div class="t r cell" style="left:798.00px;width:300px;top:869px"><span class="pd">&pound;</span>988</div>
<div class="t r cell" style="left:855.00px;width:300px;top:869px"><span class="pd">&pound;</span>1,002</div>
<div class="t r cell" style="left:913.00px;width:300px;top:869px"><span class="pd">&pound;</span>1,081</div>
<div class="t r cell" style="left:970.00px;width:300px;top:869px"><span class="pd">&pound;</span>5,999</div>
<div class="t r cell" style="left:109.5px;width:40px;top:896px;color:#999">10</div>
<div class="t r gb" style="left:22.50px;width:300px;top:896px"><span class="cp">Comprehensive</span></div>
<div class="t r gb" style="left:147.90px;width:300px;top:896px">Full</div>
<div class="t r gb" style="left:253.75px;width:300px;top:896px">46-50</div>
<div class="t r cell" style="left:385.00px;width:300px;top:896px">85512</div>
<div class="t r cell" style="left:493.00px;width:300px;top:896px">243732</div>
<div class="t r cell" style="left:601.00px;width:300px;top:896px">233</div>
<div class="t r cell" style="left:688.75px;width:300px;top:896px"><span class="pd">&pound;</span>913</div>
<div class="t r cell" style="left:740.00px;width:300px;top:896px"><span class="pd">&pound;</span>105</div>
<div class="t r cell" style="left:798.00px;width:300px;top:896px"><span class="pd">&pound;</span>864</div>
<div class="t r cell" style="left:855.00px;width:300px;top:896px"><span class="pd">&pound;</span>878</div>
<div class="t r cell" style="left:913.00px;width:300px;top:896px"><span class="pd">&pound;</span>958</div>
<div class="t r cell" style="left:970.00px;width:300px;top:896px"><span class="pd">&pound;</span>5,998</div>
<div class="t r cell" style="left:109.5px;width:40px;top:923px;color:#999">11</div>
<div class="t r gb" style="left:22.50px;width:300px;top:923px"><span class="cp">Comprehensive</span></div>
<div class="t r gb" style="left:147.90px;width:300px;top:923px">Full</div>
<div class="t r gb" style="left:253.75px;width:300px;top:923px">51-55</div>
<div class="t r cell" style="left:385.00px;width:300px;top:923px">96850</div>
<div class="t r cell" style="left:493.00px;width:300px;top:923px">262264</div>
<div class="t r cell" style="left:601.00px;width:300px;top:923px">162</div>
<div class="t r cell" style="left:688.75px;width:300px;top:923px"><span class="pd">&pound;</span>982</div>
<div class="t r cell" style="left:740.00px;width:300px;top:923px"><span class="pd">&pound;</span>104</div>
<div class="t r cell" style="left:798.00px;width:300px;top:923px"><span class="pd">&pound;</span>897</div>
<div class="t r cell" style="left:855.00px;width:300px;top:923px"><span class="pd">&pound;</span>980</div>
<div class="t r cell" style="left:913.00px;width:300px;top:923px"><span class="pd">&pound;</span>1,047</div>
<div class="t r cell" style="left:970.00px;width:300px;top:923px"><span class="pd">&pound;</span>5,999</div>
<svg style="left:0;top:0" width="1920" height="929" viewBox="0 0 1920 929"><path d="M1318.5 619 V929" stroke="#e4e4e4" stroke-width="1" stroke-dasharray="3 2"/><path d="M1394.5 619 V929" stroke="#e9e9e9" stroke-width="1"/><path d="M1478.5 619 V929" stroke="#e9e9e9" stroke-width="1"/><path d="M1561.5 619 V929" stroke="#e9e9e9" stroke-width="1"/><path d="M1645.5 619 V929" stroke="#e9e9e9" stroke-width="1"/><path d="M1729.5 619 V929" stroke="#e9e9e9" stroke-width="1"/><path d="M1812.5 619 V929" stroke="#e9e9e9" stroke-width="1"/><path d="M1384.8 632.4 H1812.8" stroke="#1e7e9b" stroke-width="2"/><path d="M1384.8 629.0 V635.8 M1812.8 629.0 V635.8" stroke="#1e7e9b" stroke-width="2"/><rect x="1588.75" y="626.05" width="8.20" height="12.7" fill="#b3ecf8" stroke="#1e7e9b" stroke-width="2"/><path d="M1590.09 626.05 V638.75" stroke="#1e7e9b" stroke-width="2"/><path d="M1593.02 627.00 V638.80" stroke="#1e7e9b" stroke-width="1.8" stroke-dasharray="3.4 1.9"/><path d="M1361.5 659.4 H1812.8" stroke="#1e7e9b" stroke-width="2"/><path d="M1361.5 656.0 V662.8 M1812.8 656.0 V662.8" stroke="#1e7e9b" stroke-width="2"/><rect x="1577.12" y="653.05" width="8.70" height="12.7" fill="#b3ecf8" stroke="#1e7e9b" stroke-width="2"/><path d="M1578.87 653.05 V665.75" stroke="#1e7e9b" stroke-width="2"/><path d="M1581.72 654.00 V665.80" stroke="#1e7e9b" stroke-width="1.8" stroke-dasharray="3.4 1.9"/><path d="M1338.8 686.4 H1812.8" stroke="#1e7e9b" stroke-width="2"/><path d="M1338.8 683.0 V689.8 M1812.8 683.0 V689.8" stroke="#1e7e9b" stroke-width="2"/><rect x="1562.89" y="680.05" width="8.29" height="12.7" fill="#b3ecf8" stroke="#1e7e9b" stroke-width="2"/><path d="M1564.65 680.05 V692.75" stroke="#1e7e9b" stroke-width="2"/><path d="M1567.16 681.00 V692.80" stroke="#1e7e9b" stroke-width="1.8" stroke-dasharray="3.4 1.9"/><path d="M1337.7 713.4 H1812.8" stroke="#1e7e9b" stroke-width="2"/><path d="M1337.7 710.0 V716.8 M1812.8 710.0 V716.8" stroke="#1e7e9b" stroke-width="2"/><rect x="1549.50" y="707.05" width="7.78" height="12.7" fill="#b3ecf8" stroke="#1e7e9b" stroke-width="2"/><path d="M1551.09 707.05 V719.75" stroke="#1e7e9b" stroke-width="2"/><path d="M1553.51 708.00 V719.80" stroke="#1e7e9b" stroke-width="1.8" stroke-dasharray="3.4 1.9"/><path d="M1328.0 740.4 H1812.8" stroke="#1e7e9b" stroke-width="2"/><path d="M1328.0 737.0 V743.8 M1812.8 737.0 V743.8" stroke="#1e7e9b" stroke-width="2"/><rect x="1529.74" y="734.05" width="6.53" height="12.7" fill="#b3ecf8" stroke="#1e7e9b" stroke-width="2"/><path d="M1531.00 734.05 V746.75" stroke="#1e7e9b" stroke-width="2"/><path d="M1533.01 735.00 V746.80" stroke="#1e7e9b" stroke-width="1.8" stroke-dasharray="3.4 1.9"/><path d="M1320.3 767.4 H1812.8" stroke="#1e7e9b" stroke-width="2"/><path d="M1320.3 764.0 V770.8 M1812.8 764.0 V770.8" stroke="#1e7e9b" stroke-width="2"/><rect x="1487.98" y="761.05" width="7.37" height="12.7" fill="#b3ecf8" stroke="#1e7e9b" stroke-width="2"/><path d="M1489.40 761.05 V773.75" stroke="#1e7e9b" stroke-width="2"/><path d="M1491.74 762.00 V773.80" stroke="#1e7e9b" stroke-width="1.8" stroke-dasharray="3.4 1.9"/><path d="M1320.3 794.4 H1812.8" stroke="#1e7e9b" stroke-width="2"/><path d="M1320.3 791.0 V797.8 M1812.8 791.0 V797.8" stroke="#1e7e9b" stroke-width="2"/><rect x="1434.41" y="788.05" width="7.62" height="12.7" fill="#b3ecf8" stroke="#1e7e9b" stroke-width="2"/><path d="M1435.83 788.05 V800.75" stroke="#1e7e9b" stroke-width="2"/><path d="M1438.34 789.00 V800.80" stroke="#1e7e9b" stroke-width="1.8" stroke-dasharray="3.4 1.9"/><path d="M1319.8 821.4 H1812.8" stroke="#1e7e9b" stroke-width="2"/><path d="M1319.8 818.0 V824.8 M1812.8 818.0 V824.8" stroke="#1e7e9b" stroke-width="2"/><rect x="1415.33" y="815.05" width="7.70" height="12.7" fill="#b3ecf8" stroke="#1e7e9b" stroke-width="2"/><path d="M1416.58 815.05 V827.75" stroke="#1e7e9b" stroke-width="2"/><path d="M1419.34 816.00 V827.80" stroke="#1e7e9b" stroke-width="1.8" stroke-dasharray="3.4 1.9"/><path d="M1319.4 848.4 H1812.8" stroke="#1e7e9b" stroke-width="2"/><path d="M1319.4 845.0 V851.8 M1812.8 845.0 V851.8" stroke="#1e7e9b" stroke-width="2"/><rect x="1403.86" y="842.05" width="8.20" height="12.7" fill="#b3ecf8" stroke="#1e7e9b" stroke-width="2"/><path d="M1405.28 842.05 V854.75" stroke="#1e7e9b" stroke-width="2"/><path d="M1408.13 843.00 V854.80" stroke="#1e7e9b" stroke-width="1.8" stroke-dasharray="3.4 1.9"/><path d="M1319.9 875.4 H1812.8" stroke="#1e7e9b" stroke-width="2"/><path d="M1319.9 872.0 V878.8 M1812.8 872.0 V878.8" stroke="#1e7e9b" stroke-width="2"/><rect x="1393.40" y="869.05" width="7.78" height="12.7" fill="#b3ecf8" stroke="#1e7e9b" stroke-width="2"/><path d="M1394.57 869.05 V881.75" stroke="#1e7e9b" stroke-width="2"/><path d="M1397.41 870.00 V881.80" stroke="#1e7e9b" stroke-width="1.8" stroke-dasharray="3.4 1.9"/><path d="M1319.5 902.4 H1812.7" stroke="#1e7e9b" stroke-width="2"/><path d="M1319.5 899.0 V905.8 M1812.7 899.0 V905.8" stroke="#1e7e9b" stroke-width="2"/><rect x="1383.02" y="896.05" width="7.87" height="12.7" fill="#b3ecf8" stroke="#1e7e9b" stroke-width="2"/><path d="M1384.19 896.05 V908.75" stroke="#1e7e9b" stroke-width="2"/><path d="M1387.12 897.00 V908.80" stroke="#1e7e9b" stroke-width="1.8" stroke-dasharray="3.4 1.9"/><path d="M1319.4 929.4 H1812.8" stroke="#1e7e9b" stroke-width="2"/><path d="M1319.4 926.0 V932.8 M1812.8 926.0 V932.8" stroke="#1e7e9b" stroke-width="2"/><rect x="1385.78" y="923.05" width="12.56" height="12.7" fill="#b3ecf8" stroke="#1e7e9b" stroke-width="2"/><path d="M1392.73 923.05 V935.75" stroke="#1e7e9b" stroke-width="2"/><path d="M1392.89 924.00 V935.80" stroke="#1e7e9b" stroke-width="1.8" stroke-dasharray="3.4 1.9"/></svg>
</body></html>
